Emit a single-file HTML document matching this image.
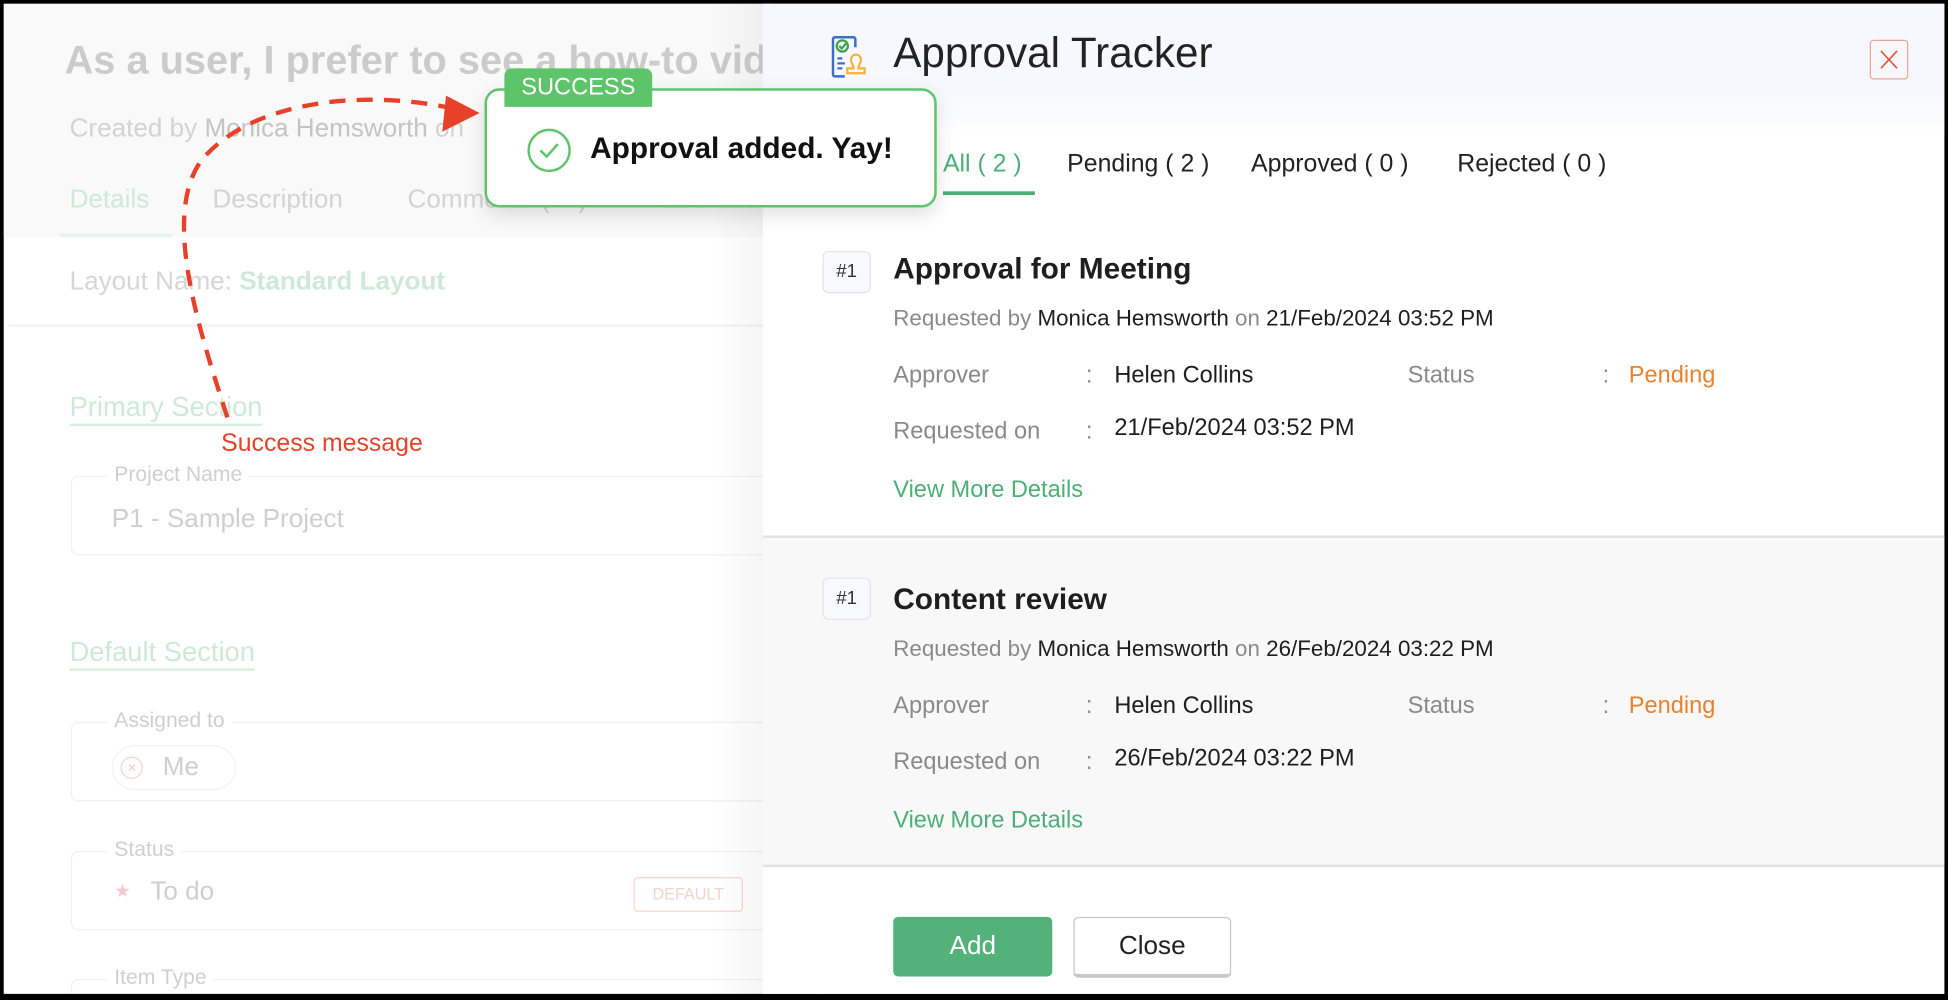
<!DOCTYPE html>
<html><head><meta charset="utf-8"><style>
html,body{margin:0;padding:0;width:1948px;height:1000px;overflow:hidden;background:#000;}
#s{position:absolute;left:0;top:0;width:1568px;height:805px;overflow:hidden;transform:scale(1.24235);transform-origin:0 0;font-family:"Liberation Sans",sans-serif;}
.a{position:absolute;white-space:nowrap;}
#frame{position:absolute;left:3px;top:3px;width:1562px;height:797px;background:#fff;overflow:hidden;}
.fs{position:absolute;left:54px;width:600px;height:62px;border:1.5px solid #f0f0f0;border-radius:6px;}
.lg{position:absolute;left:28px;top:-12px;background:#fff;padding:0 6px;color:#cfcfcf;font-size:17px;}
.g{color:#8a8a8a}.k{color:#1e1e1e}
.row{position:absolute;font-size:19px;}
</style></head><body><div id="s"><div id="frame">
<div class="a" style="left:0;top:0;width:620px;height:188px;background:#f9f9f9"></div>
<div class="a" style="left:49px;top:27px;font-size:32px;font-weight:bold;color:#cbcbcb">As a user, I prefer to see a how-to vid</div>
<div class="a" style="left:53px;top:89px;font-size:21px;color:#d3d3d3">Created by <span style="color:#c4c4c4">Monica Hemsworth</span> on</div>
<div class="a" style="left:53px;top:146px;font-size:21px;color:#cfe9d8">Details</div>
<div class="a" style="left:45px;top:185px;width:90px;height:3px;background:#e6f3ea"></div>
<div class="a" style="left:168px;top:146px;font-size:21px;color:#d3d3d3">Description</div>
<div class="a" style="left:325px;top:146px;font-size:21px;color:#d3d3d3">Comments ( 2 )</div>
<div class="a" style="left:517px;top:146px;font-size:21px;color:#d3d3d3">Attachme</div>
<div class="a" style="left:4px;top:188px;width:610px;height:70px;background:#fff;border-bottom:2px solid #f3f3f3"></div>
<div class="a" style="left:53px;top:212px;font-size:21px;color:#d6d6d6">Layout Name: <span style="color:#cfe9d8;font-weight:bold">Standard Layout</span></div>
<div class="a" style="left:53px;top:312px;font-size:22px;color:#cfe9d8;border-bottom:2px solid #d8efe0">Primary Section</div>
<div class="fs" style="top:380px"><div class="lg">Project Name</div><div class="a" style="left:32px;top:22px;font-size:21px;color:#cfcfcf">P1 - Sample Project</div></div>
<div class="a" style="left:53px;top:509px;font-size:22px;color:#cfe9d8;border-bottom:2px solid #d8efe0">Default Section</div>
<div class="fs" style="top:578px"><div class="lg">Assigned to</div><div class="a" style="left:32px;top:18px;width:98px;height:34px;border:1.5px solid #f2f2f2;border-radius:18px"><div class="a" style="left:6px;top:8px;width:16px;height:16px;border:1px solid #f6d4cc;border-radius:50%;color:#f3c8bd;font-size:12px;text-align:center;line-height:16px">×</div><div class="a" style="left:40px;top:5px;font-size:21px;color:#cfcfcf">Me</div></div></div>
<div class="fs" style="top:682px"><div class="lg">Status</div><div class="a" style="left:34px;top:22px;font-size:15px;color:#f7c9cf">★</div><div class="a" style="left:63px;top:20px;font-size:21px;color:#cfcfcf">To do</div><div class="a" style="left:452px;top:20px;width:86px;height:26px;border:1.5px solid #f6d6cf;border-radius:3px;color:#f3d3cc;font-size:13px;text-align:center;line-height:26px">DEFAULT</div></div>
<div class="fs" style="top:785px"><div class="lg">Item Type</div></div>
<div class="a" style="left:570px;top:0;width:44px;height:800px;background:linear-gradient(90deg,rgba(0,0,0,0),rgba(0,0,0,0.04))"></div>
<svg class="a" style="left:0;top:0" width="620" height="380"><path d="M180 333 C160 270 125 170 160 125 C200 78 290 68 365 85" fill="none" stroke="#e8412a" stroke-width="3.5" stroke-dasharray="13 9"/><path d="M356 74 L383 88 L353 103 Z" fill="#e8412a"/></svg>
<div class="a" style="left:175px;top:343px;font-size:20px;color:#e8412a">Success message</div>
<div class="a" style="left:611px;top:0;width:952px;height:800px;background:#fff">
<div class="a" style="left:0;top:0;width:952px;height:105px;background:linear-gradient(#f7f8fd 70%,#fff)"></div>
<svg class="a" style="left:55px;top:25px" width="34" height="36" viewBox="0 0 34 36"><path d="M16 2 H3 a1.5 1.5 0 0 0 -1.5 1.5 V32 a1.5 1.5 0 0 0 1.5 1.5 H11" fill="none" stroke="#3b6fc2" stroke-width="2"/><path d="M16 2 H18 a1.5 1.5 0 0 1 1.5 1.5 V10" fill="none" stroke="#3b6fc2" stroke-width="2"/><circle cx="9" cy="9" r="4.5" fill="none" stroke="#3aa34a" stroke-width="1.8"/><path d="M6.5 9 l2 2 l3.5 -4" fill="none" stroke="#3aa34a" stroke-width="1.8"/><path d="M5 19h4M5 23h6M5 27h4" stroke="#3b6fc2" stroke-width="1.8"/><path d="M20 16 a4 4 0 0 1 4 4 c0 3 -2 4 -2 7 h5 v4 h-14 v-4 h5 c0 -3 -2 -4 -2 -7 a4 4 0 0 1 4 -4z" fill="none" stroke="#f0b43c" stroke-width="1.8"/></svg>
<div class="a" style="left:105px;top:21px;font-size:34px;color:#222">Approval Tracker</div>
<div class="a" style="left:891px;top:29px;width:29px;height:30px;border:1.5px solid #e8a898;border-radius:3px;"><svg width="29" height="30"><path d="M8 8 L21 22 M21 8 L8 22" stroke="#e0553a" stroke-width="1.3"/></svg></div>
<div class="a" style="left:145px;top:118px;font-size:20px;color:#4caf75">All ( 2 )</div>
<div class="a" style="left:145px;top:151px;width:74px;height:3px;background:#4caf75"></div>
<div class="a" style="left:245px;top:118px;font-size:20px;color:#222">Pending ( 2 )</div>
<div class="a" style="left:393px;top:118px;font-size:20px;color:#222">Approved ( 0 )</div>
<div class="a" style="left:559px;top:118px;font-size:20px;color:#222">Rejected ( 0 )</div>
<div class="a" style="left:48px;top:199px;width:37px;height:32px;border:1.5px solid #e2e4ec;border-radius:5px;background:#f8f9fc;font-size:15px;text-align:center;line-height:32px;color:#333">#1</div>
<div class="a" style="left:105px;top:200px;font-size:24px;font-weight:bold;color:#1e1e1e">Approval for Meeting</div>
<div class="row g" style="left:105px;top:243px;font-size:18px">Requested by <span class="k">Monica Hemsworth</span> on <span class="k">21/Feb/2024 03:52 PM</span></div>
<div class="row g" style="left:105px;top:289px">Approver</div><div class="row g" style="left:260px;top:289px">:</div><div class="row k" style="left:283px;top:289px">Helen Collins</div>
<div class="row g" style="left:519px;top:289px">Status</div><div class="row g" style="left:676px;top:289px">:</div><div class="row" style="left:697px;top:289px;color:#e8822f">Pending</div>
<div class="row g" style="left:105px;top:334px">Requested on</div><div class="row g" style="left:260px;top:334px">:</div><div class="row k" style="left:283px;top:331px">21/Feb/2024 03:52 PM</div>
<div class="row" style="left:105px;top:381px;color:#4caf75">View More Details</div>
<div class="a" style="left:0;top:428px;width:952px;height:2px;background:#e2e2e2"></div>
<div class="a" style="left:0;top:430px;width:952px;height:263px;background:#f8f8f8"></div>
<div class="a" style="left:48px;top:462px;width:37px;height:32px;border:1.5px solid #e2e4ec;border-radius:5px;background:#f8f9fc;font-size:15px;text-align:center;line-height:32px;color:#333">#1</div>
<div class="a" style="left:105px;top:466px;font-size:24px;font-weight:bold;color:#1e1e1e">Content review</div>
<div class="row g" style="left:105px;top:509px;font-size:18px">Requested by <span class="k">Monica Hemsworth</span> on <span class="k">26/Feb/2024 03:22 PM</span></div>
<div class="row g" style="left:105px;top:555px">Approver</div><div class="row g" style="left:260px;top:555px">:</div><div class="row k" style="left:283px;top:555px">Helen Collins</div>
<div class="row g" style="left:519px;top:555px">Status</div><div class="row g" style="left:676px;top:555px">:</div><div class="row" style="left:697px;top:555px;color:#e8822f">Pending</div>
<div class="row g" style="left:105px;top:600px">Requested on</div><div class="row g" style="left:260px;top:600px">:</div><div class="row k" style="left:283px;top:597px">26/Feb/2024 03:22 PM</div>
<div class="row" style="left:105px;top:647px;color:#4caf75">View More Details</div>
<div class="a" style="left:0;top:693px;width:952px;height:2px;background:#e2e2e2"></div>
<div class="a" style="left:105px;top:735px;width:128px;height:48px;background:#52b27a;border-radius:4px;color:#fff;font-size:21px;text-align:center;line-height:48px">Add</div>
<div class="a" style="left:250px;top:735px;width:125px;height:45px;border:1.5px solid #c8c8c8;border-bottom-width:3px;border-radius:4px;color:#222;font-size:21px;text-align:center;line-height:46px;background:#fff">Close</div>
</div>
<div class="a" style="left:387px;top:68px;width:360px;height:92px;border:2px solid #5ec46a;border-radius:12px;background:#fff;box-shadow:0 6px 16px rgba(0,0,0,0.12)">
<svg class="a" style="left:31px;top:29px" width="38" height="38"><circle cx="19" cy="19" r="16.5" fill="none" stroke="#5ec46a" stroke-width="2"/><path d="M12 19 l5 5 l9 -10" fill="none" stroke="#5ec46a" stroke-width="2"/></svg>
<div class="a" style="left:83px;top:33px;font-size:24px;font-weight:bold;color:#111">Approval added. Yay!</div>
</div>
<div class="a" style="left:403px;top:52px;width:119px;height:31px;background:#5ec46a;border-radius:6px 6px 0 0;color:#fff;font-size:19px;text-align:center;line-height:32px">SUCCESS</div>
</div></div></body></html>
